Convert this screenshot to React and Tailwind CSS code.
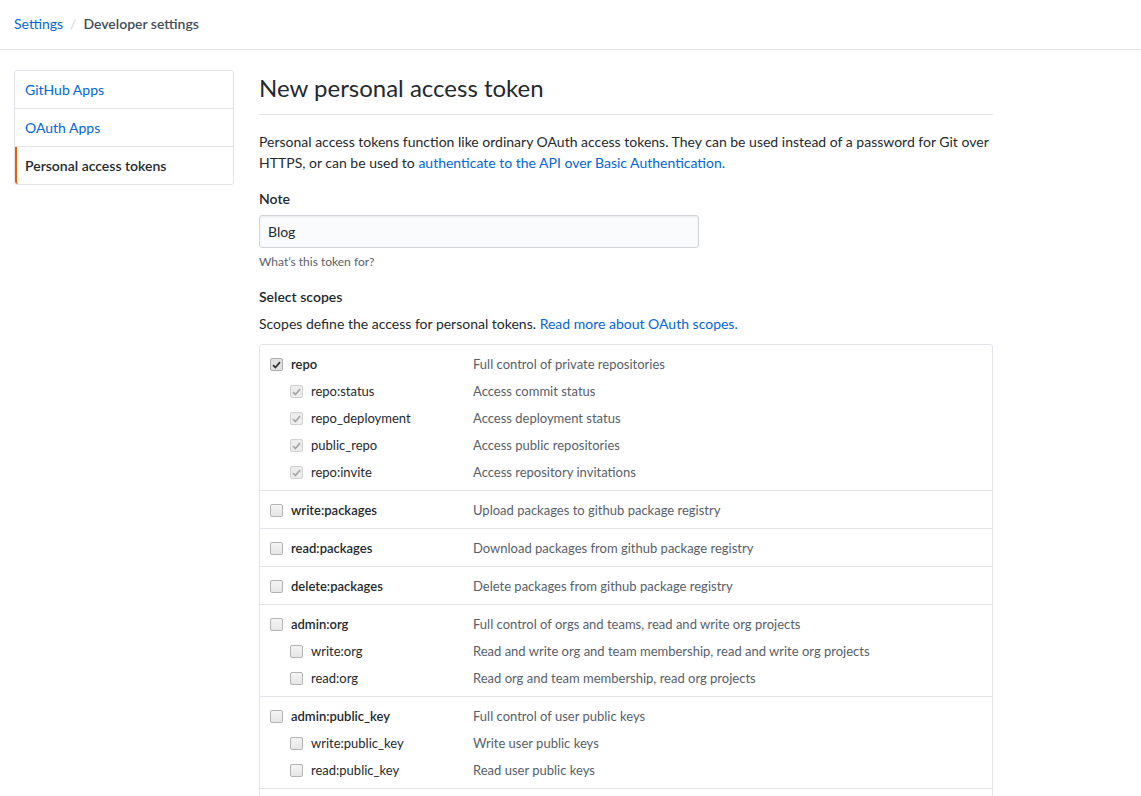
import React from 'react';

const scopes = [
  {
    name: 'repo',
    desc: 'Full control of private repositories',
    checked: true,
    children: [
      ['repo:status', 'Access commit status'],
      ['repo_deployment', 'Access deployment status'],
      ['public_repo', 'Access public repositories'],
      ['repo:invite', 'Access repository invitations'],
    ],
  },
  { name: 'write:packages', desc: 'Upload packages to github package registry' },
  { name: 'read:packages', desc: 'Download packages from github package registry' },
  { name: 'delete:packages', desc: 'Delete packages from github package registry' },
  {
    name: 'admin:org',
    desc: 'Full control of orgs and teams, read and write org projects',
    children: [
      ['write:org', 'Read and write org and team membership, read and write org projects'],
      ['read:org', 'Read org and team membership, read org projects'],
    ],
  },
  {
    name: 'admin:public_key',
    desc: 'Full control of user public keys',
    children: [
      ['write:public_key', 'Write user public keys'],
      ['read:public_key', 'Read user public keys'],
    ],
  },
  {
    name: 'admin:repo_hook',
    desc: 'Full control of repository hooks',
    children: [
      ['write:repo_hook', 'Write repository hooks'],
      ['read:repo_hook', 'Read repository hooks'],
    ],
  },
];

function Checkbox({ checked, disabled }) {
  if (!checked) {
    return (
      <span className="w-[13px] h-[13px] shrink-0 rounded-[2px] border border-[#b4b4b4] bg-gradient-to-b from-[#f4f4f4] to-[#e6e6e6]" />
    );
  }
  return (
    <span
      className={`w-[13px] h-[13px] shrink-0 rounded-[2px] border flex items-center justify-center ${
        disabled ? 'border-[#d0d0d0] bg-[#ededed]' : 'border-[#adadad] bg-[#e2e2e2]'
      }`}
    >
      <svg width="9" height="8" viewBox="0 0 9 8">
        <path
          d="M1 4.2 L3.4 6.5 L8 1.2"
          fill="none"
          stroke={disabled ? '#a8a8a8' : '#333'}
          strokeWidth="1.8"
        />
      </svg>
    </span>
  );
}

function ScopeRow({ name, desc, checked, child, parent }) {
  return (
    <div className={`flex items-center h-[21px] text-[13px] ${child ? 'mt-[6px] pl-[20px]' : ''}`}>
      <Checkbox checked={checked} disabled={child && checked} />
      <span
        className={`ml-2 ${child ? 'w-[162px]' : 'w-[182px]'} ${
          parent ? 'font-semibold text-[#24292e]' : 'text-[#24292e]'
        }`}
      >
        {name}
      </span>
      <span className="text-[#586069]">{desc}</span>
    </div>
  );
}

export default function App() {
  return (
    <div className="min-h-screen bg-white text-[14px] leading-[21px] text-[#24292e] font-['Lato',sans-serif]">
      <div className="h-[50px] border-b border-[#e1e4e8] flex items-center pl-[14px] pb-[3px]">
        <a className="text-[#0366d6]">Settings</a>
        <span className="mx-[7px] text-[#d1d5da]">/</span>
        <span className="font-semibold text-[#444d56]">Developer settings</span>
      </div>

      <div className="flex pl-[14px] pt-[20px] gap-[25px]">
        <nav className="w-[220px] shrink-0 self-start border border-[#e1e4e8] rounded-[3px] bg-white">
          <a className="block px-[10px] py-[8px] border-b border-[#e1e4e8] text-[#0366d6]">GitHub Apps</a>
          <a className="block px-[10px] py-[8px] border-b border-[#e1e4e8] text-[#0366d6]">OAuth Apps</a>
          <a className="block pl-[8px] pr-[10px] py-[8px] border-l-2 border-[#e36209] rounded-bl-[3px] font-semibold text-[#24292e]">
            Personal access tokens
          </a>
        </nav>

        <main className="w-[734px] shrink-0">
          <h1 className="text-[24px] leading-[36px] font-normal pb-[8px] border-b border-[#e1e4e8]">
            New personal access token
          </h1>
          <p className="mt-[16px]">
            Personal access tokens function like ordinary OAuth access tokens. They can be used instead of a password for Git over HTTPS, or can be used to{' '}
            <a className="text-[#0366d6]">authenticate to the API over Basic Authentication.</a>
          </p>

          <div className="mt-[15px]">
            <label className="block font-semibold">Note</label>
            <div className="mt-[6px] w-[440px] h-[33px] border border-[#d1d5da] rounded-[3px] bg-[#fafbfc] flex items-center px-[8px] shadow-[inset_0_1px_2px_rgba(27,31,35,0.075)]">
              Blog
            </div>
            <p className="mt-[5px] text-[12px] leading-[18px] text-[#586069]">What’s this token for?</p>
          </div>

          <div className="mt-[15px]">
            <label className="block font-semibold">Select scopes</label>
            <p className="mt-[6px]">
              Scopes define the access for personal tokens.{' '}
              <a className="text-[#0366d6]">Read more about OAuth scopes.</a>
            </p>
            <div className="mt-[10px] border border-[#e1e4e8] rounded-[3px]">
              {scopes.map((s, i) => (
                <div
                  key={s.name}
                  className={`pl-[10px] pt-[9px] pb-[7px] ${i > 0 ? 'border-t border-[#e1e4e8]' : ''}`}
                >
                  <ScopeRow name={s.name} desc={s.desc} checked={s.checked} parent />
                  {(s.children || []).map(([n, d]) => (
                    <ScopeRow key={n} name={n} desc={d} checked={s.checked} child />
                  ))}
                </div>
              ))}
            </div>
          </div>
        </main>
      </div>
    </div>
  );
}
